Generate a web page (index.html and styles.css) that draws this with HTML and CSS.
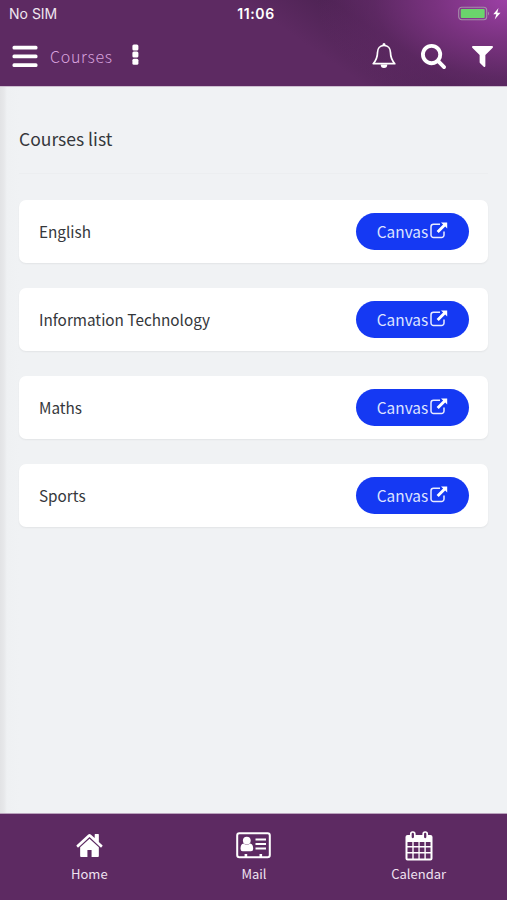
FILE: index.html
```html
<!DOCTYPE html>
<html lang="en">
<head>
<meta charset="utf-8">
<meta name="viewport" content="width=device-width, initial-scale=1">
<title>Courses</title>
<link rel="stylesheet" href="styles.css">
</head>
<body>
<div class="app">
  <header class="header">
    <div class="status">
      <span class="carrier">No SIM</span>
      <span class="clock">11:06</span>
      <span class="power">
        <svg width="43" height="16" viewBox="0 0 43 16">
          <rect x=".7" y="1.2" width="28" height="12.6" rx="3" fill="none" stroke="#a58fa9" stroke-width="1.1"/>
          <rect x="2.7" y="3.1" width="24" height="8.8" rx="1" fill="#6bd46c"/>
          <path d="M30 5.500q2 2 0 4z" fill="#a58fa9"/>
          <path d="M40.500 2L35.300 8.300h3l-1.600 5.200 5.800-6.800h-3.200z" fill="#fff"/>
        </svg>
      </span>
    </div>
    <div class="toolbar">
      <svg class="bars" width="26" height="23" viewBox="0 0 26 23" fill="#fff">
        <rect x=".5" y=".8" width="25" height="3.800" rx="1.500"/><rect x=".5" y="9.500" width="25" height="3.800" rx="1.500"/><rect x=".5" y="18.200" width="25" height="3.800" rx="1.500"/>
      </svg>
      <span class="page">Courses</span>
      <svg class="dots" width="7" height="22" viewBox="0 0 7 22" fill="#fff">
        <rect x=".4" y=".4" width="6" height="6" rx="1.500"/><rect x=".4" y="7.600" width="6" height="6" rx="1.500"/><rect x=".4" y="14.800" width="6" height="6" rx="1.500"/>
      </svg>
      <div class="actions">
        <svg width="24" height="28" viewBox="0 0 24 28">
          <path d="M12 3.500C8 3.500 5.500 6.500 5.500 10.500c0 5.500-1.800 8.300-4.300 11.200h21.600c-2.500-2.900-4.300-5.700-4.300-11.200C18.500 6.500 16 3.500 12 3.500z" fill="none" stroke="#fff" stroke-width="1.700" stroke-linejoin="round"/>
          <path d="M10.500 3.500V2.500a1.500 1.500 0 0 1 3 0v1zM8.700 22.500h6.600a3.300 3.500 0 0 1-6.600 0z" fill="#fff"/>
        </svg>
        <svg width="25" height="25" viewBox="64 128 1664 1664" fill="#fff"><path d="M1216 832q0-185-131.500-316.500t-316.500-131.500-316.500 131.500-131.500 316.500 131.500 316.500 316.500 131.500 316.500-131.500 131.500-316.500zm512 832q0 52-38 90t-90 38q-54 0-90-38l-343-342q-179 124-399 124-143 0-273.500-55.500t-225-150-150-225-55.500-273.500 55.500-273.500 150-225 225-150 273.500-55.500 273.500 55.500 225 150 150 225 55.500 273.500q0 220-124 399l343 343q37 37 37 90z"/></svg>
        <svg width="21" height="21" viewBox="191 256 1410 1408" fill="#fff"><path d="M1595 295q17 41-14 70l-493 493v742q0 42-39 59-13 5-25 5-27 0-45-19l-256-256q-19-19-19-45v-486l-493-493q-31-29-14-70 17-39 59-39h1280q42 0 59 39z"/></svg>
      </div>
    </div>
  </header>

  <main class="content">
    <h1 class="title">Courses list</h1>
    <ul class="list">
      <li class="card"><span class="name">English</span><a class="btn">Canvas<svg class="ext" viewBox="0 0 18 17"><use href="#ext"/></svg></a></li>
      <li class="card"><span class="name">Information Technology</span><a class="btn">Canvas<svg class="ext" viewBox="0 0 18 17"><use href="#ext"/></svg></a></li>
      <li class="card"><span class="name">Maths</span><a class="btn">Canvas<svg class="ext" viewBox="0 0 18 17"><use href="#ext"/></svg></a></li>
      <li class="card"><span class="name">Sports</span><a class="btn">Canvas<svg class="ext" viewBox="0 0 18 17"><use href="#ext"/></svg></a></li>
    </ul>
  </main>

  <nav class="tabs">
    <a class="tab">
      <span class="icon"><svg width="27" height="23" viewBox="0 253 1664 1283" preserveAspectRatio="none" fill="#fff"><path d="M1408 992v480q0 26-19 45t-45 19h-384v-384h-256v384h-384q-26 0-45-19t-19-45v-480q0-1 .5-3t.5-3l575-474 575 474q1 2 1 6zm223-69l-62 74q-8 9-21 11h-3q-13 0-21-7l-692-577-692 577q-12 8-24 7-13-2-21-11l-62-74q-8-10-7-23.500t11-21.500l719-599q32-26 76-26t76 26l244 204v-195q0-14 9-23t23-9h192q14 0 23 9t9 23v408l219 182q10 8 11 21.500t-7 23.500z"/></svg></span>
      <span>Home</span>
    </a>
    <a class="tab">
      <span class="icon"><svg width="35" height="27" viewBox="0 0 35 27" fill="#fff">
        <rect x="1.200" y="1.200" width="32.600" height="24" rx="2.200" fill="none" stroke="#fff" stroke-width="2"/>
        <circle cx="10.800" cy="8.600" r="3.900"/>
        <path d="M7.500 11.500q3.300 2.600 6.600 0 3.100.5 3.100 5.300 0 2.500-2.200 2.500H6.700q-2.200 0-2.200-2.500 0-4.800 3-5.300z"/>
        <path d="M19.500 6.500h10.500v2H19.500zM19.500 11h10.500v2H19.500zM19.500 15.500h10.500v2H19.500zM8.600 22h2.600v4H8.600zM23.500 22h2.600v4h-2.600z"/>
      </svg></span>
      <span>Mail</span>
    </a>
    <a class="tab">
      <span class="icon"><svg width="28" height="30" viewBox="0 0 28 30">
        <path d="M2.500 4h23a2 2 0 0 1 2 2v21.500a2 2 0 0 1-2 2h-23a2 2 0 0 1-2-2V6a2 2 0 0 1 2-2z" fill="#fff"/>
        <path d="M2.500 11h4.800v4H2.500zM8.700 11h4.700v4H8.700zM14.700 11h4.700v4h-4.700zM20.800 11h4.700v4h-4.700zM2.500 16.400h4.800v4.600H2.500zM8.700 16.400h4.700v4.600H8.700zM14.700 16.400h4.700v4.600h-4.700zM20.800 16.400h4.700v4.600h-4.700zM2.500 22.500h4.800v4.900H2.500zM8.700 22.500h4.700v4.900H8.700zM14.700 22.500h4.700v4.900h-4.700zM20.800 22.500h4.700v4.900h-4.700z" fill="#5d2a62"/>
        <g fill="#5d2a62" stroke="#fff" stroke-width="1.700"><rect x="5.800" y="1" width="4" height="7" rx="1.900"/><rect x="18.200" y="1" width="4" height="7" rx="1.900"/></g>
      </svg></span>
      <span>Calendar</span>
    </a>
  </nav>
</div>
<svg class="defs" width="0" height="0">
  <symbol id="ext" viewBox="0 0 18 17">
    <path d="M10 2.300H3.500a2.500 2.500 0 0 0-2.500 2.500v8.200a2.500 2.500 0 0 0 2.500 2.500h8a2.500 2.500 0 0 0 2.500-2.500V9.500" fill="none" stroke="#e8ebff" stroke-width="1.500"/>
    <path d="M11 .4h6.200v6.200l-2-2-6.500 6.500-2.100-2.100L13.100 2.500z" fill="#fff"/>
  </symbol>
</svg>
</body>
</html>
```
FILE: styles.css
```css
* { box-sizing: border-box; }
body {
  margin: 0;
  font-family: "Noto Sans CJK SC", "Open Sans", sans-serif;
  color: #35373b;
}
svg { display: block; flex: none; }
.defs { position: absolute; }
.app {
  height: 900px;
  display: flex;
  flex-direction: column;
}
.header {
  height: 87px;
  border-bottom: 1px solid #cdbfd0;
  background:
    radial-gradient(ellipse 190px 110px at 100% 0, #9c40a5 0, #79327f 38%, rgba(105, 44, 110, .5) 70%, rgba(93, 42, 98, 0) 100%),
    linear-gradient(35deg, #5d2a62 0, #5d2a62 58%, #4e2354 72%, #52265a 84%, #6f3076 100%);
}
.status {
  height: 28px;
  padding: 0 6px 0 9px;
  display: grid;
  grid-template-columns: 1fr auto 1fr;
  align-items: center;
  font: 14px/28px Inter, sans-serif;
  color: #efe6f0;
}
.clock { font-weight: 600; letter-spacing: .6px; color: #fff; margin-left: 2px; }
.power { justify-self: end; margin-top: -1px; }
.toolbar {
  height: 56px;
  padding: 0 14px 0 12px;
  display: flex;
  align-items: center;
}
.page {
  margin: 0 21px 0 12px;
  width: 61px;
  font-size: 16px;
  font-weight: 300;
  letter-spacing: .7px;
  line-height: 24px;
  white-space: nowrap;
  color: #d9a3de;
}
.dots { margin-bottom: 3px; }
.actions {
  margin-left: auto;
  display: flex;
  align-items: center;
  gap: 25px;
}
.actions svg:nth-child(2) { margin-right: 1px; }
.content {
  flex: 1;
  padding: 37px 19px 0;
  background: linear-gradient(90deg, #e2e3e5 0, #e7e8ea 4px, #eff1f3 7px, #f0f2f4 20px);
}
.title {
  margin: 0 0 26px;
  height: 50px;
  border-bottom: 1px solid #eceef0;
  font-size: 17.500px;
  font-weight: 400;
  line-height: 30px;
}
.list {
  margin: 0;
  padding: 0;
  list-style: none;
  display: grid;
  gap: 25px;
}
.card {
  height: 63px;
  padding: 0 19px 0 20px;
  border-radius: 7px;
  background: #fff;
  box-shadow: 0 1px 2px rgba(0, 0, 0, .06);
  display: flex;
  align-items: center;
  justify-content: space-between;
}
.name { font-size: 15.300px; line-height: 24px; margin-bottom: 1px; }
.btn {
  width: 113px;
  height: 37px;
  padding-bottom: 1px;
  border-radius: 19px;
  background: #1539f3;
  color: #dfe4ff;
  font-size: 15.400px;
  line-height: 24px;
  display: flex;
  align-items: center;
  justify-content: center;
  gap: 2px;
}
.ext { width: 18px; height: 17px; margin-bottom: 1px; }
.tabs {
  height: 87px;
  padding: 16px 6px 0 7px;
  border-top: 1px solid #b9a2bc;
  background: #5d2a62;
  display: grid;
  grid-template-columns: repeat(3, 1fr);
}
.tab {
  display: flex;
  flex-direction: column;
  align-items: center;
  font-size: 13px;
  line-height: 20px;
  color: #efe2f1;
}
.icon {
  height: 31px;
  margin-bottom: 3px;
  display: flex;
  align-items: center;
}
```
